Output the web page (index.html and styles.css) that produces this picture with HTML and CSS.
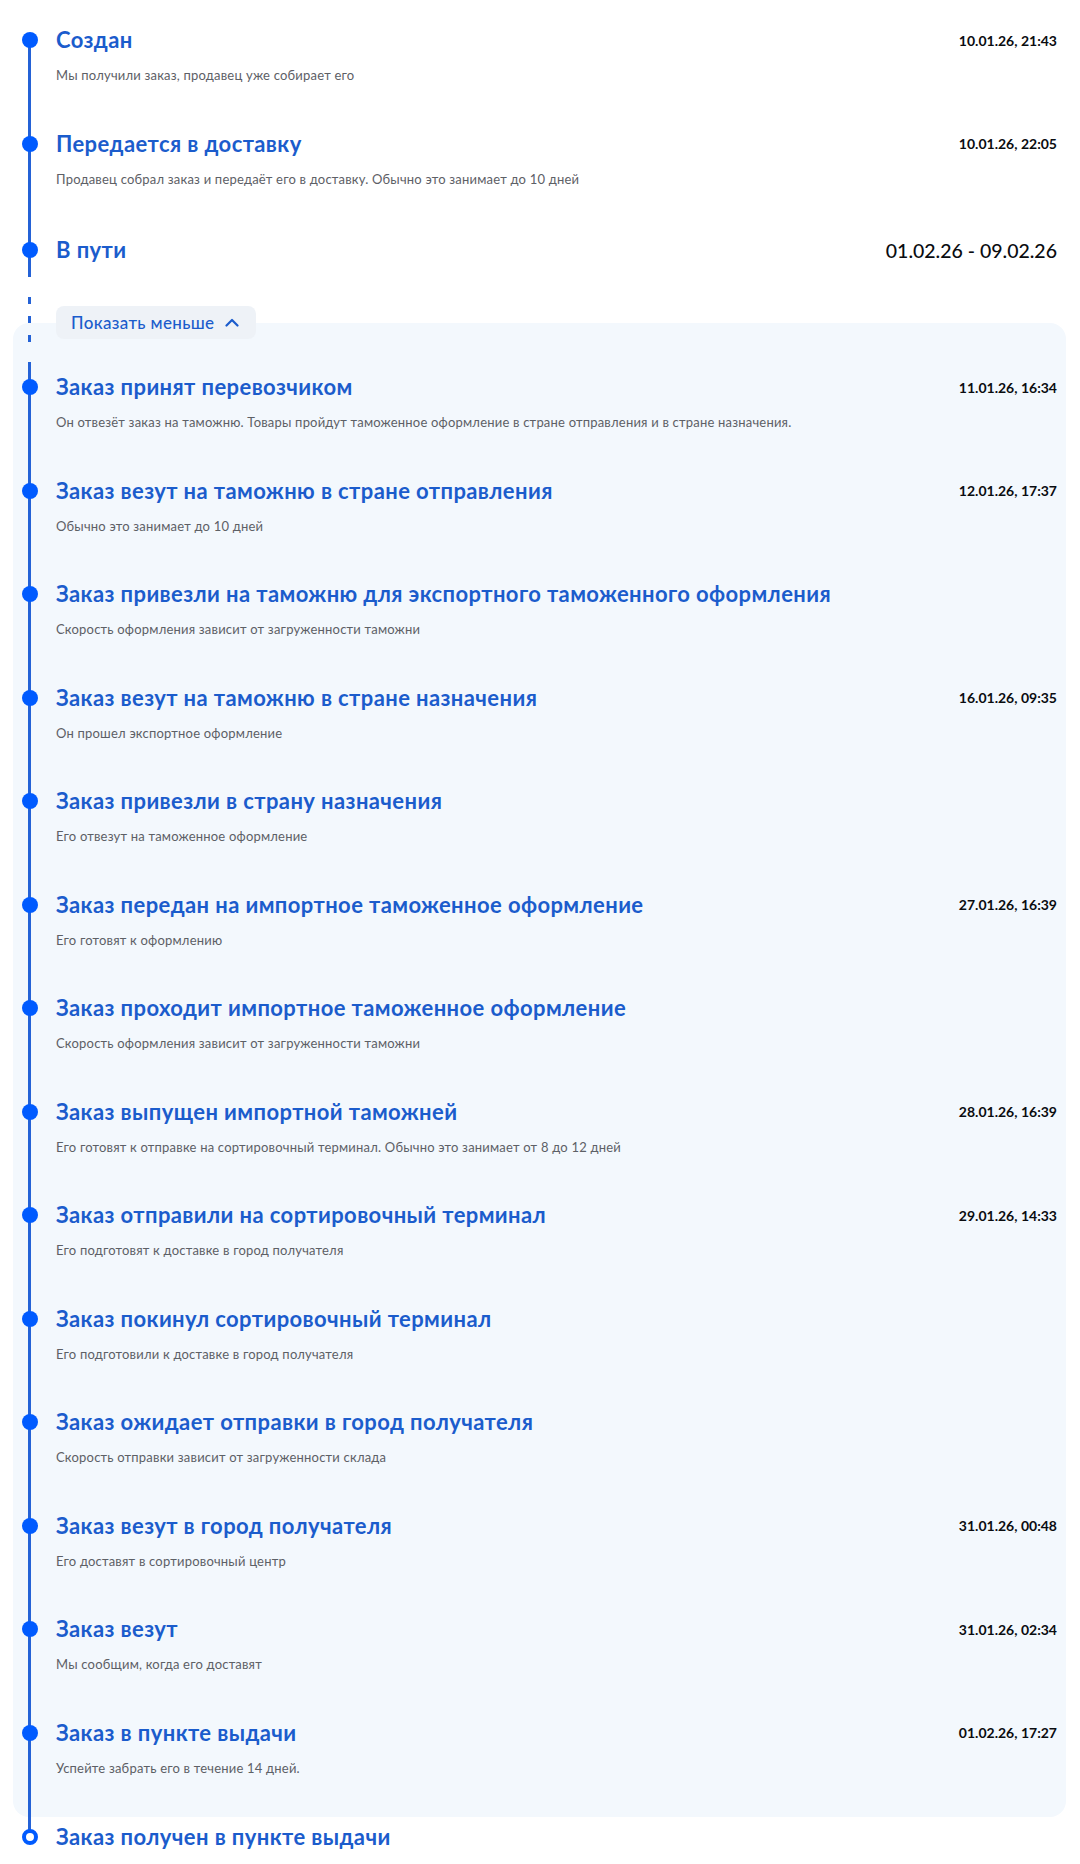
FILE: index.html
```html
<!DOCTYPE html>
<html lang="ru">
<head>
  <meta charset="UTF-8" />
  <meta name="viewport" content="width=device-width, initial-scale=1.0"/>
  <title>Статус заказа</title>
  <link rel="stylesheet" href="styles.css">
</head>
<body>

<div class="track">

  <div class="step first">
    <span class="dot"></span>
    <div class="body">
      <div class="head">
        <h3 class="title">Создан</h3>
        <span class="time">10.01.26, 21:43</span>
      </div>
      <p class="note">Мы получили заказ, продавец уже собирает его</p>
    </div>
  </div>

  <div class="step">
    <span class="dot"></span>
    <div class="body">
      <div class="head">
        <h3 class="title">Передается в доставку</h3>
        <span class="time">10.01.26, 22:05</span>
      </div>
      <p class="note">Продавец собрал заказ и передаёт его в доставку. Обычно это занимает до 10 дней</p>
    </div>
  </div>

  <div class="step current">
    <span class="dot"></span>
    <div class="body">
      <div class="head">
        <h3 class="title">В пути</h3>
        <span class="time range">01.02.26 - 09.02.26</span>
      </div>
    </div>
  </div>

  <div class="group">
    <div class="more">
      <button type="button" class="toggle">
        Показать меньше
        <svg width="14" height="9" viewBox="0 0 14 9"><polyline points="1.5,7.5 7,2 12.5,7.5" fill="none" stroke="currentColor" stroke-width="2.2" stroke-linecap="round" stroke-linejoin="round"/></svg>
      </button>
    </div>

    <div class="step">
      <span class="dot"></span>
      <div class="body">
        <div class="head">
          <h3 class="title">Заказ принят перевозчиком</h3>
          <span class="time">11.01.26, 16:34</span>
        </div>
        <p class="note">Он отвезёт заказ на таможню. Товары пройдут таможенное оформление в стране отправления и в стране назначения.</p>
      </div>
    </div>

    <div class="step">
      <span class="dot"></span>
      <div class="body">
        <div class="head">
          <h3 class="title">Заказ везут на таможню в стране отправления</h3>
          <span class="time">12.01.26, 17:37</span>
        </div>
        <p class="note">Обычно это занимает до 10 дней</p>
      </div>
    </div>

    <div class="step">
      <span class="dot"></span>
      <div class="body">
        <div class="head">
          <h3 class="title">Заказ привезли на таможню для экспортного таможенного оформления</h3>
        </div>
        <p class="note">Скорость оформления зависит от загруженности таможни</p>
      </div>
    </div>

    <div class="step">
      <span class="dot"></span>
      <div class="body">
        <div class="head">
          <h3 class="title">Заказ везут на таможню в стране назначения</h3>
          <span class="time">16.01.26, 09:35</span>
        </div>
        <p class="note">Он прошел экспортное оформление</p>
      </div>
    </div>

    <div class="step">
      <span class="dot"></span>
      <div class="body">
        <div class="head">
          <h3 class="title">Заказ привезли в страну назначения</h3>
        </div>
        <p class="note">Его отвезут на таможенное оформление</p>
      </div>
    </div>

    <div class="step">
      <span class="dot"></span>
      <div class="body">
        <div class="head">
          <h3 class="title">Заказ передан на импортное таможенное оформление</h3>
          <span class="time">27.01.26, 16:39</span>
        </div>
        <p class="note">Его готовят к оформлению</p>
      </div>
    </div>

    <div class="step">
      <span class="dot"></span>
      <div class="body">
        <div class="head">
          <h3 class="title">Заказ проходит импортное таможенное оформление</h3>
        </div>
        <p class="note">Скорость оформления зависит от загруженности таможни</p>
      </div>
    </div>

    <div class="step">
      <span class="dot"></span>
      <div class="body">
        <div class="head">
          <h3 class="title">Заказ выпущен импортной таможней</h3>
          <span class="time">28.01.26, 16:39</span>
        </div>
        <p class="note">Его готовят к отправке на сортировочный терминал. Обычно это занимает от 8 до 12 дней</p>
      </div>
    </div>

    <div class="step">
      <span class="dot"></span>
      <div class="body">
        <div class="head">
          <h3 class="title">Заказ отправили на сортировочный терминал</h3>
          <span class="time">29.01.26, 14:33</span>
        </div>
        <p class="note">Его подготовят к доставке в город получателя</p>
      </div>
    </div>

    <div class="step">
      <span class="dot"></span>
      <div class="body">
        <div class="head">
          <h3 class="title">Заказ покинул сортировочный терминал</h3>
        </div>
        <p class="note">Его подготовили к доставке в город получателя</p>
      </div>
    </div>

    <div class="step">
      <span class="dot"></span>
      <div class="body">
        <div class="head">
          <h3 class="title">Заказ ожидает отправки в город получателя</h3>
        </div>
        <p class="note">Скорость отправки зависит от загруженности склада</p>
      </div>
    </div>

    <div class="step">
      <span class="dot"></span>
      <div class="body">
        <div class="head">
          <h3 class="title">Заказ везут в город получателя</h3>
          <span class="time">31.01.26, 00:48</span>
        </div>
        <p class="note">Его доставят в сортировочный центр</p>
      </div>
    </div>

    <div class="step">
      <span class="dot"></span>
      <div class="body">
        <div class="head">
          <h3 class="title">Заказ везут</h3>
          <span class="time">31.01.26, 02:34</span>
        </div>
        <p class="note">Мы сообщим, когда его доставят</p>
      </div>
    </div>

    <div class="step">
      <span class="dot"></span>
      <div class="body">
        <div class="head">
          <h3 class="title">Заказ в пункте выдачи</h3>
          <span class="time">01.02.26, 17:27</span>
        </div>
        <p class="note">Успейте забрать его в течение 14 дней.</p>
      </div>
    </div>
  </div>

  <div class="step last">
    <span class="dot"></span>
    <div class="body">
      <div class="head">
        <h3 class="title">Заказ получен в пункте выдачи</h3>
      </div>
    </div>
  </div>

</div>

</body>
</html>
```

FILE: styles.css
```css
* {
  box-sizing: border-box;
}

body {
  margin: 0;
  background: #ffffff;
  color: #001a34;
  font-family: 'Lato', 'Noto Sans', sans-serif;
}

.track {
  padding-top: 26px;
}

/* one row of the timeline */
.step {
  display: flex;
  padding: 0 23px 45.5px 0;
  background: linear-gradient(#2462d6, #2462d6) 28px 0 / 3px 100% no-repeat;
}

.step.first {
  background-position: 28px 14px;
}

.dot {
  flex: none;
  width: 16px;
  height: 16px;
  margin: 6px 18px 0 22px;
  border-radius: 50%;
  background: #005bff;
}

.body {
  flex: 1;
  min-width: 0;
}

.head {
  display: flex;
  justify-content: space-between;
  align-items: center;
  height: 28px;
}

.title {
  margin: 0;
  font-size: 22px;
  line-height: 28px;
  font-weight: 700;
  letter-spacing: 0.4px;
  color: #1b5ccc;
  white-space: nowrap;
}

.time {
  font-size: 14px;
  font-weight: 700;
  color: #0a0c10;
}

.note {
  margin: 12px 0 0;
  font-size: 13px;
  line-height: 18px;
  letter-spacing: 0.2px;
  color: #5d6066;
}

.step.current {
  padding-bottom: 10px;
}

.step.current .head {
  height: 34px;
}

.step.current .dot {
  margin-top: 9px;
}

.time.range {
  font-size: 19.5px;
  font-weight: 500;
}

/* collapsed part */
.group {
  display: flow-root;
  margin: 46px 14px 0 13px;
  background: #f3f8fd;
  border-radius: 16px;
}

.group > .step,
.group > .more {
  margin-left: -13px;
  margin-right: -14px;
}

.group > .step:last-child {
  padding-bottom: 40px;
}

.more {
  margin-top: -46px;
  height: 96px;
  padding: 29px 0 0 56px;
  background:
    repeating-linear-gradient(#2462d6 0 7px, transparent 7px 19px) 28px 20px / 3px 46px no-repeat,
    linear-gradient(#2462d6, #2462d6) 28px 85px / 3px 11px no-repeat;
}

.toggle {
  display: inline-flex;
  align-items: center;
  gap: 11px;
  height: 33px;
  padding: 0 17px 0 15px;
  border: none;
  border-radius: 8px;
  background: #eef2f7;
  color: #1b5ccc;
  font-family: inherit;
  font-size: 17px;
  font-weight: 500;
  letter-spacing: 0.35px;
  cursor: pointer;
}

.step.last {
  padding-top: 6px;
  padding-bottom: 0;
  background-size: 3px 20px;
}

.step.last .dot {
  border: 4px solid #005bff;
  background: #ffffff;
}
```
